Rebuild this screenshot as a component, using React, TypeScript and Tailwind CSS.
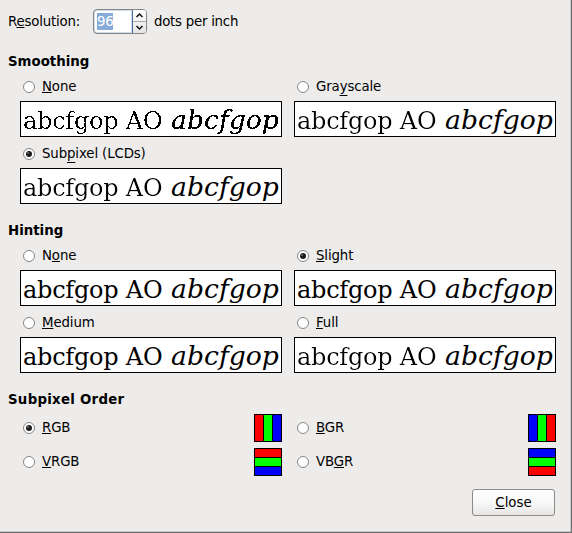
import React from "react";

/** Label text with one underlined mnemonic letter, marked by a leading underscore. */
function Mnemonic({ text, low = false }: { text: string; low?: boolean }) {
  const i = text.indexOf("_");
  return (
    <span className="whitespace-pre">
      {text.slice(0, i)}
      <span
        className={
          low
            ? "underline decoration-1 underline-offset-4 [text-decoration-skip-ink:none]"
            : "underline decoration-1 underline-offset-1 [text-decoration-skip-ink:none]"
        }
      >
        {text[i + 1]}
      </span>
      {text.slice(i + 2)}
    </span>
  );
}

function Radio({ text, checked, low }: { text: string; checked?: boolean; low?: boolean }) {
  return (
    <label className="flex h-[25px] items-center gap-[7px] pl-[3px] tracking-[-0.12px]">
      <svg width="12" height="12" viewBox="0 0 12 12" className="mt-px shrink-0">
        <circle cx="6" cy="6" r="5.5" fill="#fff" stroke="#858585" />
        {checked && <circle cx="6" cy="6" r="3" fill="#1c1c1c" />}
        {checked && <circle cx="5" cy="5" r="0.9" fill="#777" />}
      </svg>
      <Mnemonic text={text} low={low} />
    </label>
  );
}

type Look = "aliased" | "thin" | "plain";

const romanLook: Record<Look, string> = {
  aliased: "[filter:url(#aliased-thin)]",
  thin: "[filter:url(#thin)]",
  plain: "",
};

function Sample({ look = "plain" }: { look?: Look }) {
  return (
    <div className="mt-[2px] h-9 overflow-hidden border border-black bg-white">
      <div className="flex items-baseline whitespace-pre pl-[2px] pt-px font-['DejaVu_Serif',serif] leading-[34px] text-black">
        <span className={"w-[148px] text-[24px] tracking-[-0.25px] " + romanLook[look]}>abcfgop AO</span>
        <span className={"text-[26.67px] italic " + (look === "aliased" ? "[filter:url(#aliased)]" : "")}>abcfgop</span>
      </div>
    </div>
  );
}

function Option(props: { text: string; checked?: boolean; low?: boolean; look?: Look }) {
  return (
    <div>
      <Radio text={props.text} checked={props.checked} low={props.low} />
      <Sample look={props.look} />
    </div>
  );
}

const red = "bg-[#ff0000]";
const green = "bg-[#00ff00]";
const blue = "bg-[#0000ff]";

function Order({ text, colors, vertical, checked }: { text: string; colors: string[]; vertical?: boolean; checked?: boolean }) {
  return (
    <div className="flex h-7 items-start justify-between">
      <div className="pt-px">
        <Radio text={text} checked={checked} />
      </div>
      <div className={"flex size-7 gap-px border border-black bg-black " + (vertical ? "flex-col" : "")}>
        {colors.map((c) => (
          <div key={c} className={"flex-1 " + c} />
        ))}
      </div>
    </div>
  );
}

function Title({ children }: { children: React.ReactNode }) {
  return <h2 className="h-[25px] pl-2 font-bold leading-[25px]">{children}</h2>;
}

const grid = "grid grid-cols-[262px_262px] gap-x-3 gap-y-1 pl-5";

export default function App() {
  return (
    <div className="flex h-[533px] w-[572px] flex-col border-b border-r border-[#6e6e6e] bg-[#edeceb] font-['DejaVu_Sans',sans-serif] text-[13.33px] leading-4 text-black">
      <svg width="0" height="0" className="absolute">
        <filter id="aliased" x="0" y="0" width="100%" height="100%">
          <feComponentTransfer>
            <feFuncA type="discrete" tableValues="0 0 1 1 1" />
          </feComponentTransfer>
        </filter>
        <filter id="aliased-thin" x="0" y="0" width="100%" height="100%">
          <feComponentTransfer>
            <feFuncA type="discrete" tableValues="0 0 0 1 1" />
          </feComponentTransfer>
        </filter>
        <filter id="thin" x="0" y="0" width="100%" height="100%">
          <feComponentTransfer>
            <feFuncA type="gamma" exponent="1.5" amplitude="1" offset="0" />
          </feComponentTransfer>
        </filter>
      </svg>
      <div className="flex min-h-0 flex-1 flex-col border-b border-r border-[#c9c8c7]">
        <div className="flex h-[49px] items-start pl-2 pt-2">
          <div className="w-[85px] leading-[28px] tracking-[-0.2px]">
            <Mnemonic text="R_esolution:" />
          </div>
          <div className="mt-px flex h-[25px] w-[54px] overflow-hidden rounded-[4px] border border-[#858585] bg-white">
            <div className="-my-px -ml-px w-10 rounded-l-[4px] border border-[#4a6d9f] py-[3px] pl-[3px] shadow-[inset_0_0_0_1px_#cfdcec]">
              <span className="block h-[17px] w-4 overflow-hidden bg-[#86abd9] leading-[17px] tracking-[-0.3px] text-white">96</span>
            </div>
            <div className="flex flex-1 flex-col divide-y divide-[#aaa] bg-gradient-to-b from-white to-[#e6e5e4]">
              {["M3.5 7 6.5 4 9.5 7", "M3.5 4 6.5 7 9.5 4"].map((d) => (
                <svg key={d} viewBox="0 0 13 11" className="min-h-0 w-full flex-1" fill="none" stroke="#111" strokeWidth="1.5">
                  <path d={d} />
                </svg>
              ))}
            </div>
          </div>
          <div className="pl-[7px] leading-[28px] tracking-[-0.25px]">dots per inch</div>
        </div>

        <Title>Smoothing</Title>
        <div className={grid}>
          <Option text="_None" look="aliased" />
          <Option text="Gra_yscale" low look="thin" />
          <Option text="Sub_pixel (LCDs)" checked low look="thin" />
        </div>

        <div className="mt-[14px]">
          <Title>Hinting</Title>
        </div>
        <div className={grid}>
          <Option text="N_one" />
          <Option text="_Slight" checked />
          <Option text="_Medium" />
          <Option text="_Full" look="thin" />
        </div>

        <div className="mt-[14px] tracking-[0.27px]">
          <Title>Subpixel Order</Title>
        </div>
        <div className="mt-[2px] grid grid-cols-[262px_262px] gap-x-3 gap-y-[6px] pl-5">
          <Order text="_RGB" colors={[red, green, blue]} checked />
          <Order text="_BGR" colors={[blue, green, red]} />
          <Order text="_VRGB" colors={[red, green, blue]} vertical />
          <Order text="VB_GR" colors={[blue, green, red]} vertical />
        </div>

        <div className="mt-[13px] flex justify-end pr-[15px]">
          <button className="h-[27px] w-[83px] rounded-[3px] border border-[#8b8b89] bg-gradient-to-b from-white via-[#f8f8f8] to-[#e7e6e5]">
            <Mnemonic text="_Close" />
          </button>
        </div>
      </div>
    </div>
  );
}
